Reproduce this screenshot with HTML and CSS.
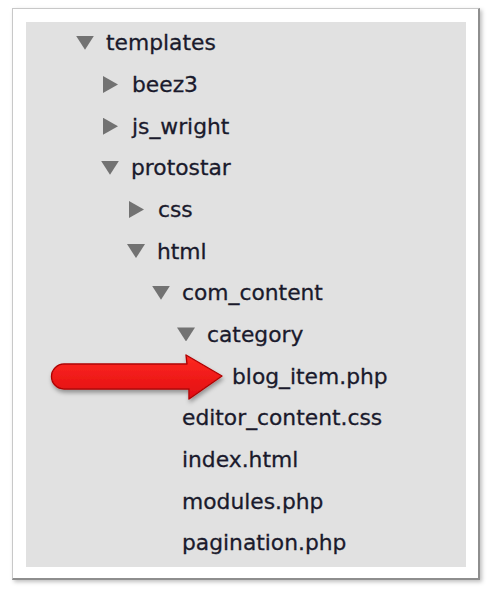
FILE: index.html
```html
<!DOCTYPE html>
<html>
<head>
<meta charset="utf-8">
<link rel="stylesheet" href="styles.css">
</head>
<body>
<div class="card">
  <div class="panel">
    <ul class="tree">
      <li class="row l0"><span class="tri down"></span>templates</li>
      <li class="row l1"><span class="tri right"></span>beez3</li>
      <li class="row l1"><span class="tri right"></span>js_wright</li>
      <li class="row l1"><span class="tri down"></span>protostar</li>
      <li class="row l2"><span class="tri right"></span>css</li>
      <li class="row l2"><span class="tri down"></span>html</li>
      <li class="row l3"><span class="tri down"></span>com_content</li>
      <li class="row l4"><span class="tri down"></span>category</li>
      <li class="row leaf5">blog_item.php</li>
      <li class="row leaf3">editor_content.css</li>
      <li class="row leaf3">index.html</li>
      <li class="row leaf3">modules.php</li>
      <li class="row leaf3">pagination.php</li>
    </ul>
    <svg class="arrow" width="200" height="64" viewBox="0 0 200 64">
      <defs>
        <filter id="sh" x="-10%" y="-30%" width="120%" height="160%">
          <feDropShadow dx="1" dy="3" stdDeviation="2" flood-color="#000" flood-opacity="0.35"/>
        </filter>
        <linearGradient id="rg" x1="0" y1="0" x2="0" y2="1">
          <stop offset="0" stop-color="#ff2a22"/>
          <stop offset="1" stop-color="#e00c10"/>
        </linearGradient>
      </defs>
      <path filter="url(#sh)" d="M24 18 L147 18 L146 9 L182 30 L149 53 L149 43 L24 43 A12.5 12.5 0 0 1 24 18 Z" fill="url(#rg)" stroke="#b00606" stroke-width="1.4" stroke-linejoin="round"/>
    </svg>
  </div>
</div>
</body>
</html>
```

FILE: styles.css
```css
html, body {
  margin: 0;
  padding: 0;
  background: #ffffff;
}
body {
  width: 492px;
  height: 596px;
  overflow: hidden;
}
.card {
  margin: 8px 0 0 12px;
  width: 468px;
  height: 572px;
  box-sizing: border-box;
  background: #fff;
  border: 1px solid #c8c8c8;
  border-right: 2px solid #8e8e8e;
  border-bottom: 2px solid #8e8e8e;
  box-shadow: 2px 2px 4px rgba(0,0,0,0.25);
  padding: 13px 13px 0 13px;
}
.panel {
  position: relative;
  width: 440px;
  height: 545px;
  background: #e1e1e1;
}
.tree {
  list-style: none;
  margin: 0;
  padding: 0;
}
.row {
  display: flex;
  align-items: center;
  height: 41.67px;
  font-family: "DejaVu Sans", Verdana, sans-serif;
  font-size: 21.8px;
  color: #1a1a2c;
  -webkit-text-stroke: 0.3px #1a1a2c;
  white-space: nowrap;
}
.tri {
  display: inline-block;
  width: 18px;
  height: 14px;
  margin-right: 12px;
  background: #727272;
}
.tri.down {
  clip-path: polygon(0 0, 100% 0, 50% 100%);
}
.tri.right {
  width: 15px;
  height: 17px;
  margin-right: 14px;
  margin-left: 2px;
  clip-path: polygon(0 0, 100% 50%, 0 100%);
}
.l0 { padding-left: 50px; }
.l1 { padding-left: 75px; }
.l2 { padding-left: 101px; }
.l3 { padding-left: 126px; }
.l4 { padding-left: 151px; }
.leaf3 { padding-left: 156px; }
.leaf5 { padding-left: 206px; }
.arrow {
  position: absolute;
  left: 14px;
  top: 324px;
}
```
